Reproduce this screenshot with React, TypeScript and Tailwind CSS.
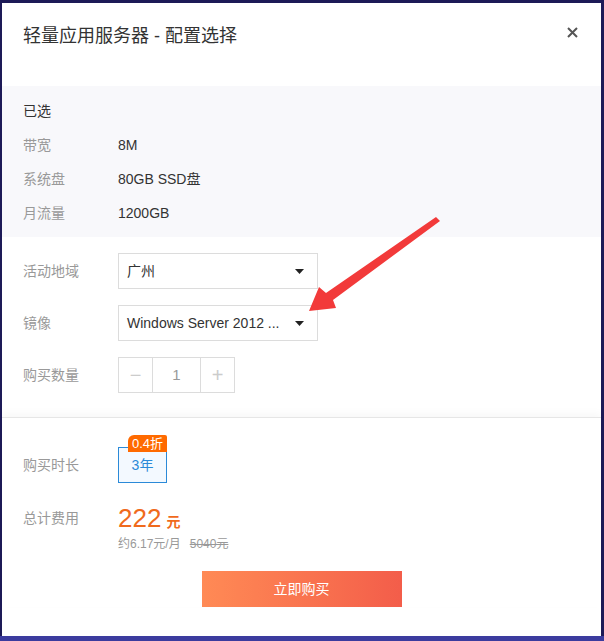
import React from "react";

const font = { fontFamily: '"Liberation Sans", "Noto Sans CJK SC", sans-serif' };

function Caret() {
  return (
    <svg width="9" height="5" viewBox="0 0 9 5" className="shrink-0">
      <path d="M0 0 L9 0 L4.5 5 Z" fill="#222" />
    </svg>
  );
}

function Select({ text }: { text: string }) {
  return (
    <div className="w-[200px] h-[36px] border border-[#dcdcdc] bg-white flex items-center pl-[8px] pr-[13px] justify-between">
      <span className="text-[14px] text-[#333] whitespace-nowrap">{text}</span>
      <Caret />
    </div>
  );
}

export default function App() {
  return (
    <div className="w-[604px] h-[641px] bg-[#1d1a57] relative overflow-hidden" style={font}>
      <div className="absolute left-0 right-0 bottom-0 h-[5px] bg-[#3b3b9e]" />
      <div className="relative ml-[2px] mt-[3px] w-[599px] h-[633px] bg-white flex flex-col">
        {/* header */}
        <div className="h-[83px] pl-[21px] pr-[23px] pt-[21px] flex justify-between items-start">
          <div className="text-[18px] text-[#333] leading-[24px]">轻量应用服务器 - 配置选择</div>
          <svg width="11" height="11" viewBox="0 0 11 11" className="mt-[3px]">
            <path d="M1 1 L10 10 M10 1 L1 10" stroke="#555" strokeWidth="2" />
          </svg>
        </div>
        {/* selected */}
        <div className="bg-[#f8f8fb] h-[151px] px-[21px] pt-[8px] flex flex-col text-[14px]">
          <div className="h-[34px] flex items-center text-[#333]">已选</div>
          <div className="h-[34px] flex items-center">
            <span className="w-[95px] text-[#999]">带宽</span>
            <span className="text-[#333]">8M</span>
          </div>
          <div className="h-[34px] flex items-center">
            <span className="w-[95px] text-[#999]">系统盘</span>
            <span className="text-[#333]">80GB SSD盘</span>
          </div>
          <div className="h-[34px] flex items-center">
            <span className="w-[95px] text-[#999]">月流量</span>
            <span className="text-[#333]">1200GB</span>
          </div>
        </div>
        {/* form */}
        <div className="px-[21px] pt-[16px] pb-[24px] flex flex-col gap-[16px] text-[14px]">
          <div className="flex items-center">
            <span className="w-[95px] text-[#999]">活动地域</span>
            <Select text="广州" />
          </div>
          <div className="flex items-center">
            <span className="w-[95px] text-[#999]">镜像</span>
            <Select text="Windows Server 2012 ..." />
          </div>
          <div className="flex items-center">
            <span className="w-[95px] text-[#999]">购买数量</span>
            <div className="flex h-[36px] border border-[#dcdcdc]">
              <div className="w-[34px] flex items-center justify-center text-[#ccc] text-[20px] border-r border-[#dcdcdc]">−</div>
              <div className="w-[47px] flex items-center justify-center text-[#999] text-[15px]">1</div>
              <div className="w-[34px] flex items-center justify-center text-[#ccc] text-[20px] border-l border-[#dcdcdc]">+</div>
            </div>
          </div>
        </div>
        {/* bottom */}
        <div className="border-t border-[#e6e6e6] shadow-[0_-4px_8px_rgba(0,0,0,0.03)] px-[21px] pt-[29px] flex flex-col text-[14px]">
          <div className="flex items-center">
            <span className="w-[95px] text-[#999]">购买时长</span>
            <div className="relative w-[49px] h-[36px] border border-[#2b8ad8] bg-[#f3f9ff] flex items-center justify-center text-[#2b8ad8] text-[14px]">
              3年
              <div className="absolute right-[-1px] top-[-13px] h-[17px] px-[4px] bg-[#ff6a00] text-white text-[13px] leading-[17px] rounded-tl-[6px] rounded-tr-[2px] whitespace-nowrap">0.4折</div>
            </div>
          </div>
          <div className="flex mt-[20px]">
            <span className="w-[95px] text-[#999] pt-[5px]">总计费用</span>
            <div className="flex flex-col">
              <div className="flex items-baseline text-[#f06a1c]">
                <span className="text-[26px] leading-[30px]">222</span>
                <span className="text-[14px] font-bold ml-[5px]">元</span>
              </div>
              <div className="text-[12px] text-[#999] mt-[2px]">
                约6.17元/月<span className="ml-[9px] line-through">5040元</span>
              </div>
            </div>
          </div>
          <div className="flex justify-center mt-[18px]">
            <div className="w-[200px] h-[36px] bg-gradient-to-r from-[#ff8a55] to-[#f35d4a] text-white text-[14px] flex items-center justify-center">立即购买</div>
          </div>
        </div>
      </div>
      {/* arrow overlay */}
      <svg className="absolute left-0 top-0 pointer-events-none" width="604" height="641">
        <path d="M436 217 L440 221 L333 300 L336 308 L309 311 L319 287 L326 293 Z" fill="#f23a3a" />
      </svg>
    </div>
  );
}
